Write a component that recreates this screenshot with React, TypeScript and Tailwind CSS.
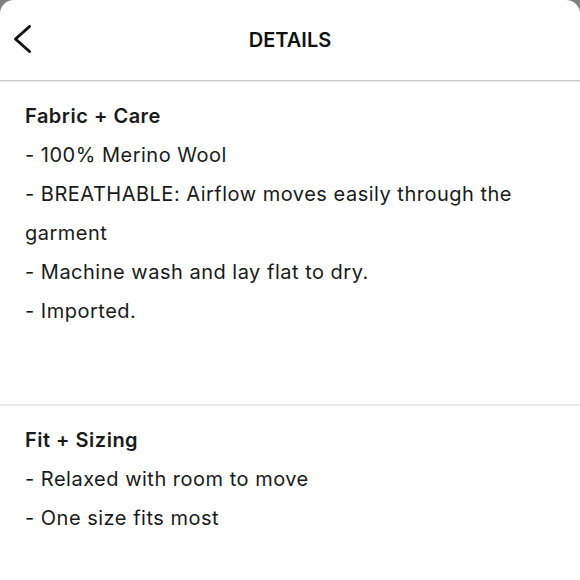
import React from "react";

export default function App() {
  const font = { fontFamily: 'Inter, "Noto Sans", "Liberation Sans", sans-serif' };
  return (
    <div className="w-[580px] h-[580px] bg-[#808080] overflow-hidden" style={font}>
      <div className="w-full h-full bg-white rounded-t-[14px] flex flex-col">
        <div className="relative h-[81px] shrink-0 flex items-center justify-center border-b border-[#c9c9c9] shadow-[0_1px_1px_rgba(0,0,0,0.08)]">
          <svg className="absolute left-[12px] top-[24px]" width="22" height="30" viewBox="0 0 22 30" fill="none">
            <path d="M17.5 2.5 L3.5 15 L17.5 27.5" stroke="#111" strokeWidth="3" strokeLinecap="round" strokeLinejoin="round" />
          </svg>
          <span className="text-[20px] font-semibold text-[#111]">DETAILS</span>
        </div>
        <div className="h-[325px] shrink-0 border-b-2 border-[#ebebeb] pl-[25px] pr-[25px] pt-[16px] text-[20px] tracking-[0.5px] leading-[39px] text-[#1a1a1a]">
          <div className="font-semibold">Fabric + Care</div>
          <div>- 100% Merino Wool</div>
          <div>- BREATHABLE: Airflow moves easily through the garment</div>
          <div>- Machine wash and lay flat to dry.</div>
          <div>- Imported.</div>
        </div>
        <div className="px-[25px] pt-[15px] text-[20px] tracking-[0.5px] leading-[39px] text-[#1a1a1a]">
          <div className="font-semibold">Fit + Sizing</div>
          <div>- Relaxed with room to move</div>
          <div>- One size fits most</div>
        </div>
      </div>
    </div>
  );
}
